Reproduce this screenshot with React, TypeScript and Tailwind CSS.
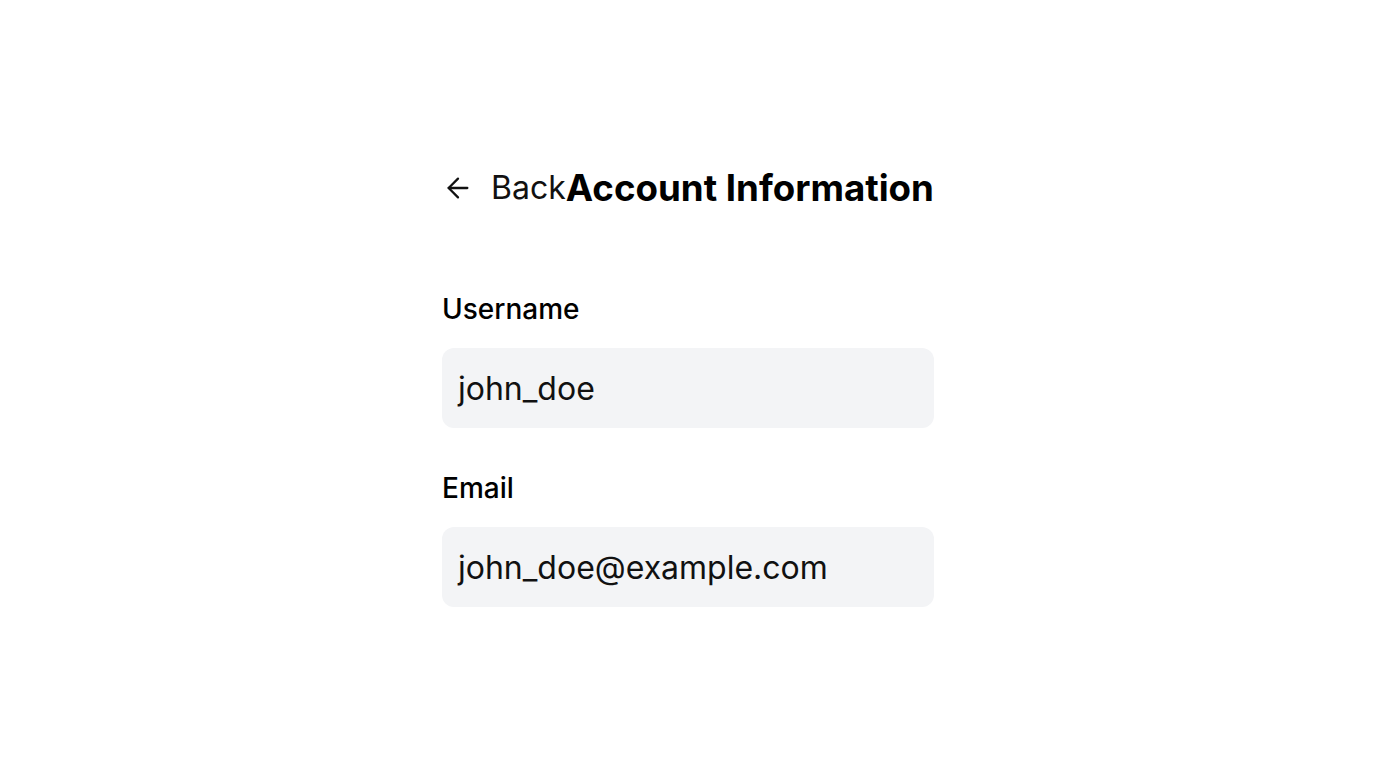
import { ArrowLeft } from 'lucide-react';

export default function App() {
  return (
    <div className="min-h-screen bg-white flex justify-center font-['Inter',sans-serif] text-black">
      <div className="w-[492px] pt-[164px]">
        {/* Header */}
        <div className="flex items-center h-[48px] whitespace-nowrap">
          <button className="shrink-0 flex items-center gap-[17px] text-[32px] font-normal text-[#111]">
            <ArrowLeft size={32} strokeWidth={1.7} />
            <span>Back</span>
          </button>
          <h1 className="shrink-0 text-[36.7px] font-bold">Account Information</h1>
        </div>

        <div className="mt-[83px] flex flex-col">
          <label className="text-[28px] font-medium leading-none">Username</label>
          <div className="mt-[25px] h-[80px] rounded-[12px] bg-[#f3f4f6] flex items-center px-[16px] pt-[1px] text-[32px] text-[#111]">
            john_doe
          </div>

          <label className="mt-[46px] text-[28px] font-medium leading-none">Email</label>
          <div className="mt-[25px] h-[80px] rounded-[12px] bg-[#f3f4f6] flex items-center px-[16px] pt-[1px] text-[32px] text-[#111]">
            john_doe@example.com
          </div>
        </div>
      </div>
    </div>
  );
}
